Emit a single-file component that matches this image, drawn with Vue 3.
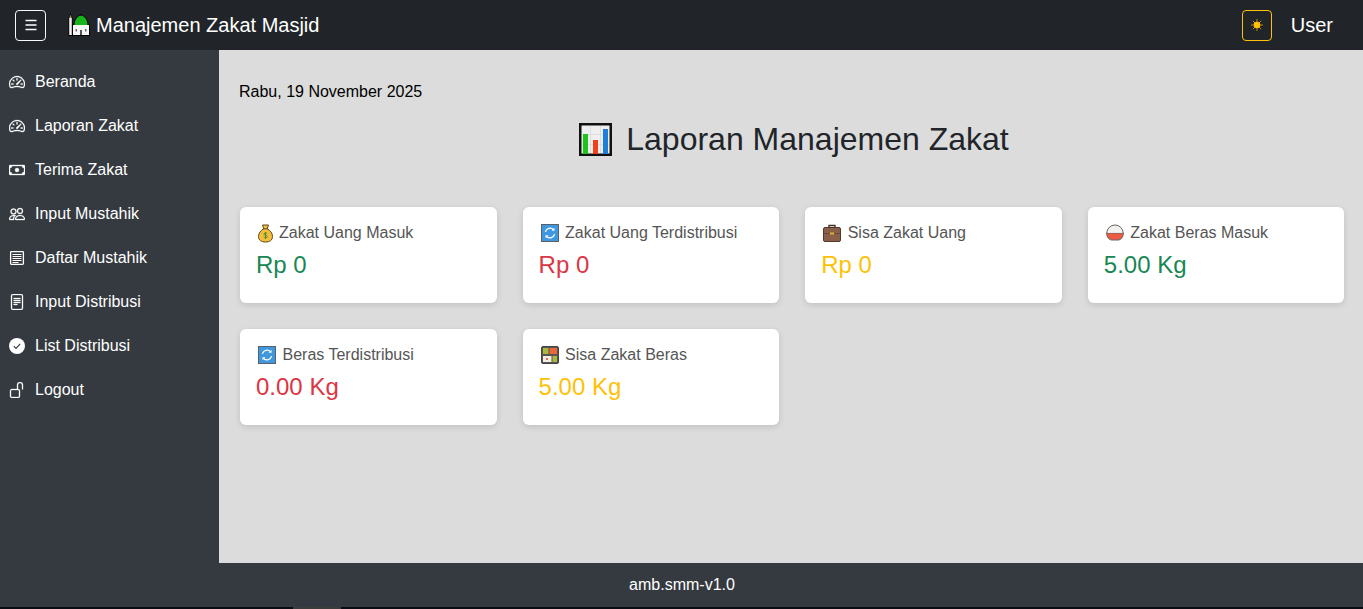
<script setup>
const menu = [
  { label: 'Beranda', icon: 'gauge' },
  { label: 'Laporan Zakat', icon: 'gauge' },
  { label: 'Terima Zakat', icon: 'cash' },
  { label: 'Input Mustahik', icon: 'people' },
  { label: 'Daftar Mustahik', icon: 'list' },
  { label: 'Input Distribusi', icon: 'doc' },
  { label: 'List Distribusi', icon: 'check' },
  { label: 'Logout', icon: 'unlock' }
]
const cards = [
  { label: 'Zakat Uang Masuk', value: 'Rp 0', tone: 'green', emoji: 'bag' },
  { label: 'Zakat Uang Terdistribusi', value: 'Rp 0', tone: 'red', emoji: 'sync' },
  { label: 'Sisa Zakat Uang', value: 'Rp 0', tone: 'yellow', emoji: 'case' },
  { label: 'Zakat Beras Masuk', value: '5.00 Kg', tone: 'green', emoji: 'rice' },
  { label: 'Beras Terdistribusi', value: '0.00 Kg', tone: 'red', emoji: 'sync' },
  { label: 'Sisa Zakat Beras', value: '5.00 Kg', tone: 'yellow', emoji: 'bento' }
]
</script>

<template>
  <div class="page">
    <header class="topbar">
      <button class="toggle" aria-label="Menu">
        <svg width="16" height="16" viewBox="0 0 16 16" fill="none" stroke="#fff" stroke-width="1.4"><path d="M2.500 3.500h11M2.500 8h11M2.500 12.500h11" /></svg>
      </button>
      <svg class="mosque" width="23" height="24" viewBox="0 0 23 24">
        <path d="M3.500 0L5.500 5v18h-4V5z" fill="#000" />
        <path d="M3.500 1.500L4.800 5h-2.600z" fill="#8a8a60" />
        <rect x="2.200" y="5" width="2.600" height="17" fill="#ececec" />
        <rect x="5" y="11" width="18" height="12" fill="#000" />
        <path d="M14 .5l1.200 1.800c3.600 1.200 6.300 4.600 6.300 9.700h-15c0-5.100 2.700-8.500 6.300-9.700z" fill="#000" />
        <path d="M14 2.500c3.800.8 6.500 4.300 6.500 9.500h-13c0-5.200 2.700-8.700 6.500-9.500z" fill="#17b31d" />
        <rect x="6" y="12" width="16" height="10" fill="#f6f6f6" />
        <rect x="8.500" y="16" width="1.500" height="2.500" fill="#666" />
        <rect x="13" y="17" width="2" height="5" fill="#555" />
        <rect x="18" y="16" width="1.500" height="2.500" fill="#666" />
      </svg>
      <span class="brand">Manajemen Zakat Masjid</span>
      <span class="spacer"></span>
      <button class="theme" aria-label="Tema">
        <svg width="12" height="12" viewBox="0 0 12 12"><g stroke="#b98a10" stroke-width="1"><path d="M6 0v12M0 6h12M1.800 1.800l8.400 8.400M10.200 1.800l-8.400 8.400" /></g><circle cx="6" cy="6" r="3.300" fill="#ffc107" /></svg>
      </button>
      <span class="user">User</span>
    </header>

    <div class="body">
      <aside class="sidebar">
        <a v-for="m in menu" :key="m.label" class="item">
          <svg class="ico" width="16" height="16" viewBox="0 0 16 16" fill="#fff" stroke="#fff" stroke-width=".3">
            <template v-if="m.icon === 'gauge'">
              <path d="M8 4a.5.5 0 0 1 .5.5V6a.5.5 0 0 1-1 0V4.500A.5.5 0 0 1 8 4M3.732 5.732a.5.5 0 0 1 .707 0l.915.914a.5.5 0 1 1-.708.708l-.914-.915a.5.5 0 0 1 0-.707M2 10a.5.5 0 0 1 .5-.5h1.586a.5.5 0 0 1 0 1H2.500A.5.5 0 0 1 2 10m9.500 0a.5.5 0 0 1 .5-.5h1.500a.5.5 0 0 1 0 1H12a.5.5 0 0 1-.5-.5m.754-4.246a.39.39 0 0 0-.527-.02L7.547 9.310a.91.91 0 1 0 1.302 1.258l3.434-4.297a.39.39 0 0 0-.029-.518z" />
              <path fill-rule="evenodd" d="M0 10a8 8 0 1 1 15.547 2.661c-.442 1.253-1.845 1.602-2.932 1.250C11.309 13.488 9.475 13 8 13c-1.474 0-3.310.488-4.615.911-1.087.352-2.490.003-2.932-1.250A8 8 0 0 1 0 10m8-7a7 7 0 0 0-6.603 9.329c.203.575.923.876 1.680.630C4.397 12.533 6.358 12 8 12s3.604.532 4.923.96c.757.245 1.477-.056 1.680-.631A7 7 0 0 0 8 3" />
            </template>
            <template v-else-if="m.icon === 'cash'">
              <path d="M8 10a2 2 0 1 0 0-4 2 2 0 0 0 0 4" />
              <path fill-rule="evenodd" d="M0 4a1 1 0 0 1 1-1h14a1 1 0 0 1 1 1v8a1 1 0 0 1-1 1H1a1 1 0 0 1-1-1zm3 0a2 2 0 0 1-2 2v4a2 2 0 0 1 2 2h10a2 2 0 0 1 2-2V6a2 2 0 0 1-2-2z" />
            </template>
            <template v-else-if="m.icon === 'people'">
              <path fill-rule="evenodd" d="M15 14s1 0 1-1-1-4-5-4-5 3-5 4 1 1 1 1zm-7.978-1L7 12.996c.001-.264.167-1.030.76-1.720C8.312 10.629 9.282 10 11 10c1.717 0 2.687.63 3.240 1.276.593.69.758 1.457.76 1.720l-.008.002-.014.002H7.022zM11 7a2 2 0 1 0 0-4 2 2 0 0 0 0 4m3-2a3 3 0 1 1-6 0 3 3 0 0 1 6 0M6.936 9.280a6 6 0 0 0-1.230-.247A7 7 0 0 0 5 9c-4 0-5 3-5 4q0 1 1 1h4.216A2.240 2.240 0 0 1 5 13c0-1.010.377-2.042 1.090-2.904.243-.294.526-.569.846-.816M4.920 10A5.500 5.500 0 0 0 4 13H1c0-.26.164-1.030.76-1.724.545-.636 1.492-1.256 3.160-1.275zM1.500 5.500a3 3 0 1 1 6 0 3 3 0 0 1-6 0m3-2a2 2 0 1 0 0 4 2 2 0 0 0 0-4" />
            </template>
            <template v-else-if="m.icon === 'list'">
              <rect x="1.600" y="1.600" width="12.800" height="12.800" rx=".8" fill="none" stroke="#fff" stroke-width="1.300" />
              <path d="M3.500 4.500h9M3.500 6.500h9M3.500 8.500h9M3.500 10.500h9M3.500 12.500h6" stroke="#fff" stroke-width="1.100" />
            </template>
            <template v-else-if="m.icon === 'doc'">
              <path d="M5 4a.5.5 0 0 0 0 1h6a.5.5 0 0 0 0-1zm-.5 2.500A.5.5 0 0 1 5 6h6a.5.5 0 0 1 0 1H5a.5.5 0 0 1-.5-.5M5 8a.5.5 0 0 0 0 1h6a.5.5 0 0 0 0-1zm0 2a.5.5 0 0 0 0 1h3a.5.5 0 0 0 0-1z" />
              <path fill-rule="evenodd" d="M2 2a2 2 0 0 1 2-2h8a2 2 0 0 1 2 2v12a2 2 0 0 1-2 2H4a2 2 0 0 1-2-2zm10-1H4a1 1 0 0 0-1 1v12a1 1 0 0 0 1 1h8a1 1 0 0 0 1-1V2a1 1 0 0 0-1-1" />
            </template>
            <template v-else-if="m.icon === 'check'">
              <circle cx="8" cy="8" r="8" stroke="none" />
              <path d="M4.800 8.200l2.200 2.200 4.200-4.600" fill="none" stroke="#343a40" stroke-width="1.100" />
            </template>
            <template v-else>
              <path fill-rule="evenodd" d="M11 1a2 2 0 0 0-2 2v4a2 2 0 0 1 2 2v5a2 2 0 0 1-2 2H3a2 2 0 0 1-2-2V9a2 2 0 0 1 2-2h5V3a3 3 0 0 1 6 0v4a.5.5 0 0 1-1 0V3a2 2 0 0 0-2-2M3 8a1 1 0 0 0-1 1v5a1 1 0 0 0 1 1h6a1 1 0 0 0 1-1V9a1 1 0 0 0-1-1z" />
            </template>
          </svg>
          <span>{{ m.label }}</span>
        </a>
      </aside>

      <main class="main">
        <p class="date">Rabu, 19 November 2025</p>
        <h1 class="title">
          <svg width="33" height="33" viewBox="0 0 33 33">
            <rect x="1.250" y="1.250" width="30.500" height="30.500" fill="#efefef" stroke="#111" stroke-width="2.500" />
            <path d="M11.500 3v27M21.500 3v27M3 11.500h27M3 21.500h27" stroke="#dedede" stroke-width="1" />
            <rect x="4" y="11" width="5" height="20" fill="#1cc41c" />
            <rect x="14" y="17" width="5" height="14" fill="#f0401c" />
            <rect x="24" y="6" width="5" height="25" fill="#1d7fd8" />
          </svg>
          <span>Laporan Manajemen Zakat</span>
        </h1>

        <section class="grid">
          <article v-for="c in cards" :key="c.label" class="card">
            <div class="label" :class="{ narrow: c.emoji === 'bag' }">
              <svg v-if="c.emoji === 'bag'" width="15" height="19" viewBox="0 0 15 19">
                <path d="M4.500 1h6L9.200 4.800c3 1.500 5.300 4.300 5.300 7.700 0 3.800-3 5.500-7 5.500s-7-1.700-7-5.500c0-3.400 2.300-6.200 5.300-7.700z" fill="#f5bd3a" stroke="#5a4a20" stroke-width="1" />
                <path d="M5.200 4.800h4.600" stroke="#5a4a20" stroke-width="1" />
                <path d="M9.300 9.500c-.6-.9-3.400-.9-3.400.6 0 1.600 3.400.9 3.400 2.500 0 1.500-2.800 1.500-3.600.4M7.500 8v7" fill="none" stroke="#3c8a3c" stroke-width=".9" />
              </svg>
              <svg v-else-if="c.emoji === 'sync'" width="18" height="18" viewBox="0 0 18 18">
                <rect x=".5" y=".5" width="17" height="17" fill="#3f97de" stroke="#5a6068" stroke-width="1" />
                <path d="M4.400 7.800a4.800 4.800 0 0 1 8-2.300M13.600 10.200a4.800 4.800 0 0 1-8 2.300" fill="none" stroke="#fff" stroke-width="1.300" />
                <path d="M13.500 3.800v3h-3zM4.500 14.200v-3h3z" fill="#fff" />
              </svg>
              <svg v-else-if="c.emoji === 'case'" width="18" height="18" viewBox="0 0 18 18">
                <path d="M6 4V1.500h6V4" fill="none" stroke="#3f3026" stroke-width="1.400" />
                <rect x=".5" y="3.500" width="17" height="14" rx="1.500" fill="#8a6148" stroke="#4e3a2c" stroke-width="1" />
                <path d="M1 9.500h16" stroke="#6d4c38" stroke-width="1" />
                <rect x="7" y="8.500" width="4" height="2" fill="#e2ae3c" />
              </svg>
              <svg v-else-if="c.emoji === 'rice'" width="18" height="18" viewBox="0 0 18 18">
                <path d="M.8 9a8.200 8 0 0 1 16.400 0z" fill="#f2f0ec" stroke="#666" stroke-width="1" />
                <path d="M.6 9h16.800c0 4-2.400 7-5.400 7H6c-3 0-5.400-3-5.400-7z" fill="#ec5a44" stroke="#666" stroke-width="1" />
                <path d="M1.500 8.300h15" stroke="#fff" stroke-width="1" />
              </svg>
              <svg v-else width="18" height="18" viewBox="0 0 18 18">
                <rect x=".5" y=".5" width="17" height="17" rx="1.500" fill="#5b5550" stroke="#444" stroke-width="1" />
                <rect x="2" y="2" width="5.500" height="6" fill="#a8b83e" />
                <rect x="8.500" y="2" width="7.500" height="6" fill="#e8683c" />
                <rect x="2" y="10" width="8.500" height="6" fill="#f3ece4" />
                <rect x="11.500" y="10" width="4.500" height="6" fill="#a8b83e" />
                <circle cx="6" cy="13" r="1" fill="#d8453a" />
              </svg>
              <span>{{ c.label }}</span>
            </div>
            <div class="value" :class="c.tone">{{ c.value }}</div>
          </article>
        </section>
      </main>
    </div>

    <footer class="footer">amb.smm-v1.0</footer>
    <div class="edge"><span></span></div>
  </div>
</template>

<style>
html, body { margin: 0; background: #dcdcdc; }
</style>

<style scoped>
.page {
  width: 1363px;
  height: 609px;
  display: flex;
  flex-direction: column;
  overflow: hidden;
  font-family: "Liberation Sans", Arial, sans-serif;
}
.topbar {
  height: 50px;
  flex: none;
  background: #212529;
  display: flex;
  align-items: center;
  padding: 0 30px 0 15px;
  color: #fff;
}
.toggle {
  width: 31px;
  height: 31px;
  padding: 0;
  border: 1px solid #f8f9fa;
  border-radius: 4px;
  background: transparent;
  display: flex;
  align-items: center;
  justify-content: center;
}
.mosque { margin-left: 21px; }
.brand { margin-left: 6px; font-size: 20px; line-height: 30px; }
.spacer { flex: 1; }
.theme {
  width: 30px;
  height: 31px;
  padding: 0;
  border: 1px solid #ffc107;
  border-radius: 4px;
  background: transparent;
  display: flex;
  align-items: center;
  justify-content: center;
}
.user { margin-left: 19px; font-size: 20px; line-height: 30px; }
.body { flex: 1; min-height: 0; display: flex; }
.sidebar {
  width: 219px;
  flex: none;
  background: #343a40;
  padding-top: 10px;
  box-sizing: border-box;
}
.item {
  height: 44px;
  display: flex;
  align-items: center;
  gap: 10px;
  padding-left: 9px;
  color: #fff;
  font-size: 16px;
}
.ico { flex: none; }
.main {
  flex: 1;
  min-width: 0;
  background: #dcdcdc;
  padding: 33px 19px 0 20px;
  box-sizing: border-box;
}
.date { margin: 0; font-size: 16px; line-height: 18px; color: #000; }
.title {
  margin: 17px 0 0;
  height: 42px;
  display: flex;
  align-items: center;
  justify-content: center;
  gap: 14px;
  padding-left: 5px;
  font-size: 32px;
  font-weight: 400;
  color: #212529;
}
.grid {
  margin: 47px 0 0 1px;
  display: grid;
  grid-template-columns: repeat(4, 256.6px);
  column-gap: 26px;
  row-gap: 26px;
}
.card {
  height: 96px;
  box-sizing: border-box;
  padding: 17px 16px 0;
  background: #fff;
  border-radius: 6px;
  box-shadow: 0 2px 6px rgba(0, 0, 0, .12);
}
.label {
  height: 18px;
  display: flex;
  align-items: center;
  gap: 6.5px;
  padding-left: 2px;
  font-size: 16px;
  color: #555;
}
.label.narrow { gap: 6px; }
.value { margin-top: 8px; font-size: 24px; line-height: 29px; }
.green { color: #198754; }
.red { color: #dc3545; }
.yellow { color: #ffc107; }
.footer {
  height: 44px;
  flex: none;
  background: #343a40;
  color: #fff;
  font-size: 16px;
  display: flex;
  align-items: center;
  justify-content: center;
  padding-left: 1px;
}
.edge { height: 2px; flex: none; background: #0a0c14; padding-left: 293px; }
.edge span { display: block; width: 48px; height: 2px; background: #3c3c3c; }
</style>
